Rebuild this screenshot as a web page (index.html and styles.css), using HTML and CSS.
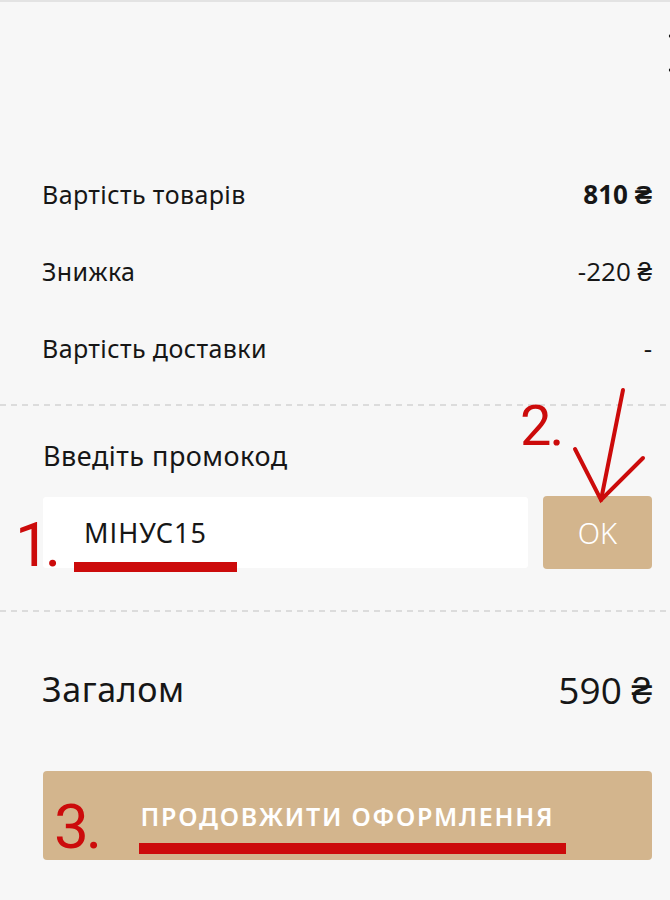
FILE: index.html
```html
<!DOCTYPE html>
<html>
<head>
    <title>Кошик</title>
    <link rel="stylesheet" href="styles.css">
</head>
<body>
    <div class="panel">
        <div class="panel-head">
            <button class="close-btn" aria-label="Закрити">
                <svg viewBox="0 0 40 40" width="40" height="40">
                    <path d="M3,3 L37,37 M37,3 L3,37" stroke="#111" stroke-width="4" stroke-linecap="round" fill="none"/>
                </svg>
            </button>
        </div>

        <div class="summary">
            <div class="summary-row">
                <span>Вартість товарів</span>
                <span class="sum strong">810 ₴</span>
            </div>
            <div class="summary-row">
                <span>Знижка</span>
                <span class="sum">-220 ₴</span>
            </div>
            <div class="summary-row">
                <span>Вартість доставки</span>
                <span class="sum">-</span>
            </div>
        </div>

        <div class="divider"></div>

        <div class="promo">
            <div class="promo-label">Введіть промокод</div>
            <div class="promo-form">
                <input class="promo-input" type="text" value="МІНУС15">
                <button class="promo-btn">OK</button>
            </div>
        </div>

        <div class="divider"></div>

        <div class="total">
            <span>Загалом</span>
            <span class="sum">590 ₴</span>
        </div>

        <div class="checkout">
            <button class="checkout-btn">Продовжити оформлення</button>
        </div>

        <!-- hand-drawn hints over the form -->
        <svg class="hints" viewBox="0 0 670 900" width="670" height="900">
            <g fill="#cc0b0b" font-family="Roboto, sans-serif" letter-spacing="-5">
                <text x="15" y="566" font-size="62">1.</text>
                <text x="520" y="445" font-size="56" letter-spacing="-2">2.</text>
                <text x="54" y="848" font-size="62" letter-spacing="-3">3.</text>
            </g>
            <g fill="#cc0b0b">
                <rect x="74" y="562" width="163" height="10"/>
                <rect x="139" y="843" width="427" height="11"/>
            </g>
            <g stroke="#cc0b0b" stroke-width="4" fill="none" stroke-linecap="round">
                <path d="M623,390 L601,500"/>
                <path d="M575,449 L601,500 L643,458"/>
            </g>
        </svg>
    </div>
</body>
</html>
```

FILE: styles.css
```css
body {
    margin: 0;
    background-color: #f7f7f7;
    font-family: "Noto Sans", "Open Sans", sans-serif;
    color: #161616;
    overflow: hidden;
}
.panel {
    position: relative;
    width: 670px;
    height: 900px;
    border-top: 2px solid #e3e3e3;
    box-sizing: border-box;
}
.panel-head {
    height: 153px;
    display: flex;
    justify-content: flex-end;
    align-items: flex-start;
}
.close-btn {
    margin-top: 31px;
    margin-right: -38px;
    padding: 0;
    border: none;
    background: none;
    width: 40px;
    height: 40px;
    cursor: pointer;
}
.summary {
    padding: 0 18px 18px 42px;
}
.summary-row {
    height: 77px;
    display: flex;
    justify-content: space-between;
    align-items: center;
    font-size: 25px;
    letter-spacing: 0.4px;
}
.sum {
    font-family: "Open Sans", sans-serif;
    font-size: 26px;
    letter-spacing: 0;
}
.strong {
    font-weight: 700;
}
.divider {
    height: 2px;
    background: repeating-linear-gradient(to right, #dcdcdc 0 6px, transparent 6px 11px);
}
.promo {
    padding: 34px 18px 41px 43px;
}
.promo-label {
    font-size: 27px;
    line-height: 32px;
    letter-spacing: 0.5px;
    margin-bottom: 25px;
}
.promo-form {
    display: flex;
    gap: 15px;
}
.promo-input {
    flex: 1;
    min-width: 0;
    height: 71px;
    box-sizing: border-box;
    border: none;
    border-radius: 3px;
    background: #fff;
    padding: 0 0 0 41px;
    font-family: "Noto Sans", sans-serif;
    font-size: 27px;
    letter-spacing: 1px;
    color: #161616;
    outline: none;
}
.promo-btn {
    width: 109px;
    height: 73px;
    margin-top: -1px;
    border: none;
    border-radius: 4px;
    background-color: #d3b58d;
    color: #fff;
    font-family: "Noto Sans", sans-serif;
    font-size: 29px;
    font-weight: 300;
    cursor: pointer;
}
.total {
    display: flex;
    justify-content: space-between;
    align-items: center;
    padding: 59px 18px 0 42px;
    height: 36px;
    font-size: 34px;
    letter-spacing: 0.6px;
}
.total .sum {
    font-size: 37px;
}
.checkout {
    padding: 64px 18px 0 43px;
}
.checkout-btn {
    width: 100%;
    height: 89px;
    border: none;
    border-radius: 4px;
    background-color: #d3b58d;
    color: #fff;
    font-family: "Noto Sans", sans-serif;
    font-size: 25px;
    font-weight: 600;
    letter-spacing: 1.75px;
    text-transform: uppercase;
    cursor: pointer;
}
.hints {
    position: absolute;
    left: 0;
    top: -2px;
    pointer-events: none;
}
```
